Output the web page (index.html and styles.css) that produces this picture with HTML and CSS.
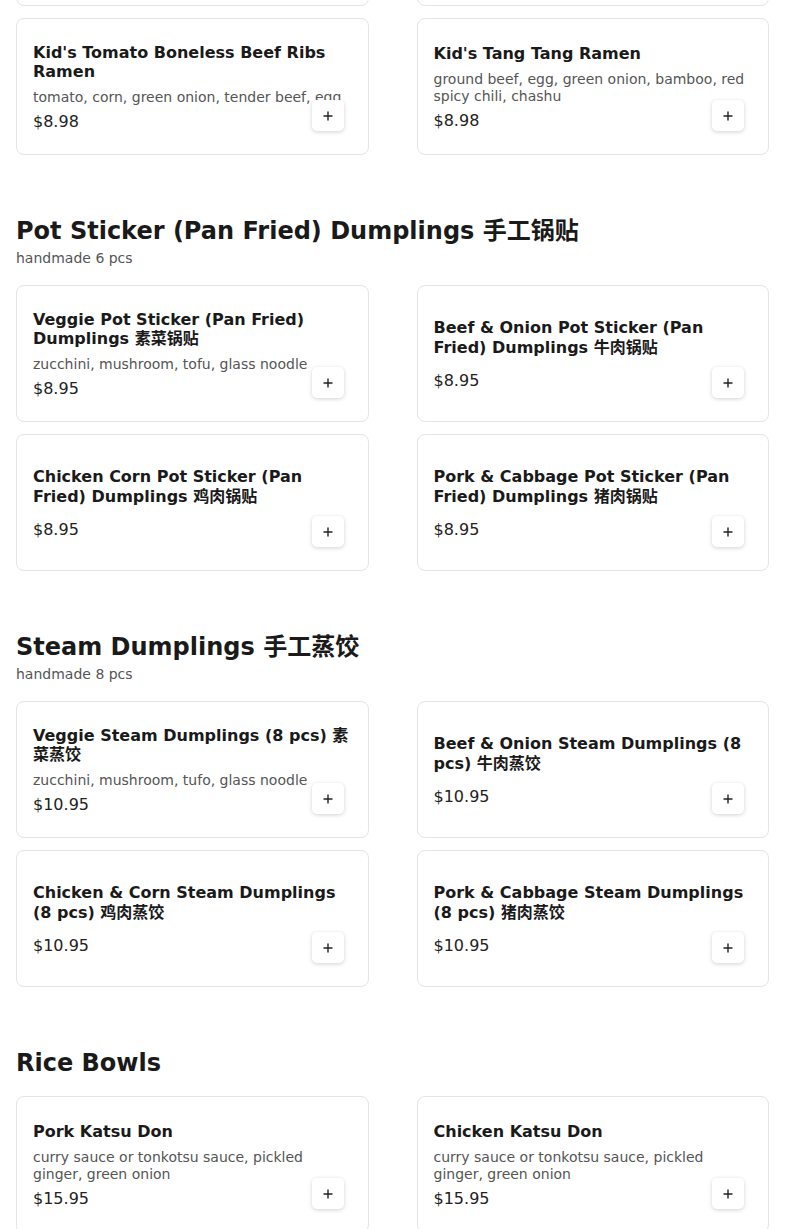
FILE: index.html
```html
<!DOCTYPE html>
<html lang="en">
<head>
<meta charset="utf-8">
<title>Menu</title>
<link rel="stylesheet" href="styles.css">
</head>
<body>
<main class="menu">
  <section class="section">
    <header class="section-head">
      <h2 class="section-title">Kid's Menu</h2>
    </header>
    <div class="grid">
      <article class="card">
        <h3 class="item-name">Kid's Tonkotsu Ramen</h3>
        <p class="item-desc">chashu, egg, corn, green onion</p>
        <p class="item-price">$8.98</p>
        <button class="add" aria-label="Add"><svg viewBox="0 0 10 10" width="10" height="10"><path d="M5 0.5v9M0.5 5h9" stroke="#222" stroke-width="1.4" fill="none"/></svg></button>
      </article>
      <article class="card">
        <h3 class="item-name">Kid's Chicken Ramen</h3>
        <p class="item-desc">chicken, corn, green onion, egg</p>
        <p class="item-price">$8.98</p>
        <button class="add" aria-label="Add"><svg viewBox="0 0 10 10" width="10" height="10"><path d="M5 0.5v9M0.5 5h9" stroke="#222" stroke-width="1.4" fill="none"/></svg></button>
      </article>
      <article class="card">
        <h3 class="item-name">Kid's Tomato Boneless Beef Ribs Ramen</h3>
        <p class="item-desc">tomato, corn, green onion, tender beef, egg</p>
        <p class="item-price">$8.98</p>
        <button class="add" aria-label="Add"><svg viewBox="0 0 10 10" width="10" height="10"><path d="M5 0.5v9M0.5 5h9" stroke="#222" stroke-width="1.4" fill="none"/></svg></button>
      </article>
      <article class="card">
        <h3 class="item-name">Kid's Tang Tang Ramen</h3>
        <p class="item-desc">ground beef, egg, green onion, bamboo, red spicy chili, chashu</p>
        <p class="item-price">$8.98</p>
        <button class="add" aria-label="Add"><svg viewBox="0 0 10 10" width="10" height="10"><path d="M5 0.5v9M0.5 5h9" stroke="#222" stroke-width="1.4" fill="none"/></svg></button>
      </article>
    </div>
  </section>

  <section class="section">
    <header class="section-head">
      <h2 class="section-title">Pot Sticker (Pan Fried) Dumplings <span class="zh">手工锅贴</span></h2>
      <p class="section-sub">handmade 6 pcs</p>
    </header>
    <div class="grid">
      <article class="card">
        <h3 class="item-name">Veggie Pot Sticker (Pan Fried) Dumplings <span class="zh">素菜锅贴</span></h3>
        <p class="item-desc">zucchini, mushroom, tofu, glass noodle</p>
        <p class="item-price">$8.95</p>
        <button class="add" aria-label="Add"><svg viewBox="0 0 10 10" width="10" height="10"><path d="M5 0.5v9M0.5 5h9" stroke="#222" stroke-width="1.4" fill="none"/></svg></button>
      </article>
      <article class="card">
        <h3 class="item-name">Beef &amp; Onion Pot Sticker (Pan Fried) Dumplings <span class="zh">牛肉锅贴</span></h3>
        <p class="item-desc"></p>
        <p class="item-price">$8.95</p>
        <button class="add" aria-label="Add"><svg viewBox="0 0 10 10" width="10" height="10"><path d="M5 0.5v9M0.5 5h9" stroke="#222" stroke-width="1.4" fill="none"/></svg></button>
      </article>
      <article class="card">
        <h3 class="item-name">Chicken Corn Pot Sticker (Pan Fried) Dumplings <span class="zh">鸡肉锅贴</span></h3>
        <p class="item-desc"></p>
        <p class="item-price">$8.95</p>
        <button class="add" aria-label="Add"><svg viewBox="0 0 10 10" width="10" height="10"><path d="M5 0.5v9M0.5 5h9" stroke="#222" stroke-width="1.4" fill="none"/></svg></button>
      </article>
      <article class="card">
        <h3 class="item-name">Pork &amp; Cabbage Pot Sticker (Pan Fried) Dumplings <span class="zh">猪肉锅贴</span></h3>
        <p class="item-desc"></p>
        <p class="item-price">$8.95</p>
        <button class="add" aria-label="Add"><svg viewBox="0 0 10 10" width="10" height="10"><path d="M5 0.5v9M0.5 5h9" stroke="#222" stroke-width="1.4" fill="none"/></svg></button>
      </article>
    </div>
  </section>

  <section class="section">
    <header class="section-head">
      <h2 class="section-title">Steam Dumplings <span class="zh">手工蒸饺</span></h2>
      <p class="section-sub">handmade 8 pcs</p>
    </header>
    <div class="grid">
      <article class="card">
        <h3 class="item-name">Veggie Steam Dumplings (8 pcs) <span class="zh">素菜蒸饺</span></h3>
        <p class="item-desc">zucchini, mushroom, tufo, glass noodle</p>
        <p class="item-price">$10.95</p>
        <button class="add" aria-label="Add"><svg viewBox="0 0 10 10" width="10" height="10"><path d="M5 0.5v9M0.5 5h9" stroke="#222" stroke-width="1.4" fill="none"/></svg></button>
      </article>
      <article class="card">
        <h3 class="item-name">Beef &amp; Onion Steam Dumplings (8 pcs) <span class="zh">牛肉蒸饺</span></h3>
        <p class="item-desc"></p>
        <p class="item-price">$10.95</p>
        <button class="add" aria-label="Add"><svg viewBox="0 0 10 10" width="10" height="10"><path d="M5 0.5v9M0.5 5h9" stroke="#222" stroke-width="1.4" fill="none"/></svg></button>
      </article>
      <article class="card">
        <h3 class="item-name">Chicken &amp; Corn Steam Dumplings (8 pcs) <span class="zh">鸡肉蒸饺</span></h3>
        <p class="item-desc"></p>
        <p class="item-price">$10.95</p>
        <button class="add" aria-label="Add"><svg viewBox="0 0 10 10" width="10" height="10"><path d="M5 0.5v9M0.5 5h9" stroke="#222" stroke-width="1.4" fill="none"/></svg></button>
      </article>
      <article class="card">
        <h3 class="item-name">Pork &amp; Cabbage Steam Dumplings (8 pcs) <span class="zh">猪肉蒸饺</span></h3>
        <p class="item-desc"></p>
        <p class="item-price">$10.95</p>
        <button class="add" aria-label="Add"><svg viewBox="0 0 10 10" width="10" height="10"><path d="M5 0.5v9M0.5 5h9" stroke="#222" stroke-width="1.4" fill="none"/></svg></button>
      </article>
    </div>
  </section>

  <section class="section">
    <header class="section-head">
      <h2 class="section-title">Rice Bowls</h2>
    </header>
    <div class="grid">
      <article class="card">
        <h3 class="item-name">Pork Katsu Don</h3>
        <p class="item-desc">curry sauce or tonkotsu sauce, pickled ginger, green onion</p>
        <p class="item-price">$15.95</p>
        <button class="add" aria-label="Add"><svg viewBox="0 0 10 10" width="10" height="10"><path d="M5 0.5v9M0.5 5h9" stroke="#222" stroke-width="1.4" fill="none"/></svg></button>
      </article>
      <article class="card">
        <h3 class="item-name">Chicken Katsu Don</h3>
        <p class="item-desc">curry sauce or tonkotsu sauce, pickled ginger, green onion</p>
        <p class="item-price">$15.95</p>
        <button class="add" aria-label="Add"><svg viewBox="0 0 10 10" width="10" height="10"><path d="M5 0.5v9M0.5 5h9" stroke="#222" stroke-width="1.4" fill="none"/></svg></button>
      </article>
    </div>
  </section>
</main>
</body>
</html>
```

FILE: styles.css
```css
* {
  box-sizing: border-box;
}

html, body {
  margin: 0;
  padding: 0;
  background: #ffffff;
}

body {
  font-family: "DejaVu Sans", "Noto Sans CJK SC", sans-serif;
  color: #1a1a1a;
}

.menu {
  padding: 0 16px 40px;
  margin-top: -178px;
  display: flex;
  flex-direction: column;
  gap: 62px;
}

.section-head {
  margin-bottom: 18px;
}

.section-title {
  margin: 0;
  font-size: 24px;
  line-height: 29px;
  font-weight: 700;
  color: #1a1a1a;
}

.section-sub {
  margin: 4px 0 0;
  font-size: 14px;
  line-height: 17px;
  color: #555555;
}

.zh {
  line-height: 1;
}

.grid {
  display: grid;
  grid-template-columns: 1fr 1fr;
  column-gap: 48px;
  row-gap: 12px;
}

.card {
  position: relative;
  min-height: 137px;
  padding: 16px;
  border: 1px solid #e4e4e4;
  border-radius: 8px;
  background: #ffffff;
  display: flex;
  flex-direction: column;
  justify-content: center;
}

.item-name {
  margin: 0;
  font-size: 16px;
  line-height: 1.2;
  font-weight: 700;
  color: #1a1a1a;
}

.item-desc {
  margin: 8px 0;
  font-size: 14px;
  line-height: 1.2;
  color: #555555;
}

.item-price {
  margin: 0;
  font-size: 16px;
  line-height: 1;
  color: #222222;
}

.add {
  position: absolute;
  right: 24px;
  bottom: 23px;
  width: 32px;
  height: 31px;
  padding: 0;
  border: none;
  border-radius: 5px;
  background: #ffffff;
  box-shadow: 0 1px 4px rgba(0, 0, 0, 0.18);
  display: flex;
  align-items: center;
  justify-content: center;
  cursor: pointer;
}

.add svg {
  display: block;
}
```
